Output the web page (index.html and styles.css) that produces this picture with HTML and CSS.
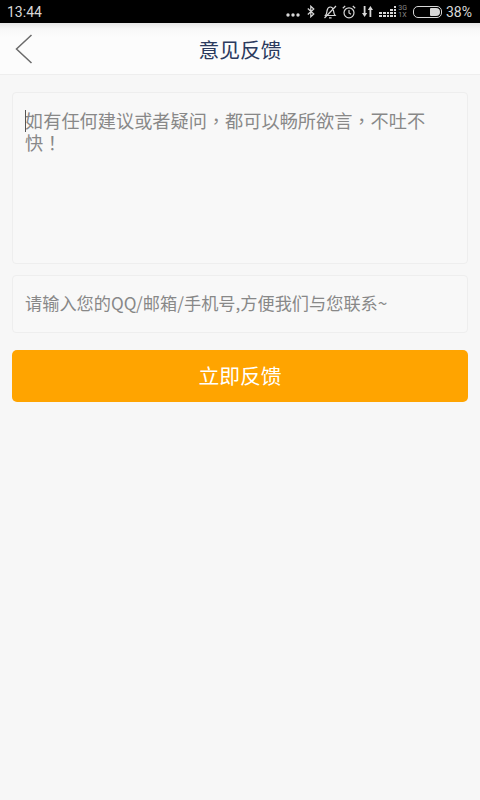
FILE: index.html
```html
<!DOCTYPE html>
<html lang="zh-CN">
<head>
    <meta charset="UTF-8">
    <meta name="viewport" content="width=device-width, initial-scale=1.0">
    <title>意见反馈</title>
    <link rel="stylesheet" href="styles.css">
</head>
<body>
    <div class="status-bar">
        <span class="status-time">13:44</span>
        <div class="status-icons">
            <svg class="icon-dots" width="14" height="4" viewBox="0 0 14 4"><circle cx="2" cy="2" r="1.7"/><circle cx="7" cy="2" r="1.7"/><circle cx="12" cy="2" r="1.7"/></svg>
            <svg class="icon-line icon-bt" width="8" height="13" viewBox="0 0 8 13"><path d="M.8 3.500l6 5.500-3 2.800V1.200l3 2.800-6 5.500" /></svg>
            <svg class="icon-line icon-bell" width="14" height="14" viewBox="0 0 14 14"><path d="M2.500 10.500c1.400-1.500 1.200-3.200 1.600-5C4.500 3.500 5.800 2 7.300 2s2.800 1.500 3.200 3.500c.4 1.800.2 3.500 1.600 5H2.500zM6 12.800h2.600M1.500 13L13 1"/></svg>
            <svg class="icon-line icon-alarm" width="14" height="14" viewBox="0 0 14 14"><circle cx="7" cy="7.800" r="5"/><path d="M7 5v3l2 1.200M.8 3.200L3.200 1M13.200 3.200L10.800 1"/></svg>
            <svg class="icon-fill" width="11" height="11" viewBox="0 0 11 11"><path d="M1.700 0h1.800v7H5.200L2.600 11 0 7h1.700zM7.500 11h1.800V4H11L8.400 0 5.800 4h1.700z"/></svg>
            <div class="signal">
                <i class="bar-1"></i><i class="bar-1"></i><i class="bar-1"></i><i class="bar-2"></i><i class="bar-3"></i>
            </div>
            <div class="net-type"><span>3G</span><span>1X</span></div>
            <div class="battery"><div class="battery-level"></div></div>
            <span class="status-percent">38%</span>
        </div>
    </div>

    <div class="header">
        <svg class="back-icon" width="18" height="30" viewBox="0 0 18 30"><path d="M16.500 1L1.500 15l15 14"/></svg>
        <h1>意见反馈</h1>
    </div>

    <form class="feedback-form">
        <div class="field field-message" lang="zh-TW">
            <span class="caret"></span>如有任何建议或者疑问，都可以畅所欲言，不吐不快！
        </div>
        <div class="field field-contact">请输入您的QQ/邮箱/手机号,方便我们与您联系~</div>
        <button type="button" class="submit-btn">立即反馈</button>
    </form>
</body>
</html>
```

FILE: styles.css
```css
html, body {
    height: 100%;
}

body {
    margin: 0;
    background: #f7f7f7;
    font-family: "Noto Sans CJK SC", "Liberation Sans", sans-serif;
}

.status-bar {
    height: 23px;
    background: #000;
    color: #d8d8d8;
    display: flex;
    align-items: center;
    justify-content: space-between;
    padding: 0 8px 0 7px;
    font-family: Roboto, "Liberation Sans", sans-serif;
    font-size: 14px;
}

.status-icons {
    display: flex;
    align-items: center;
}

.status-icons svg {
    display: block;
}

.icon-dots {
    fill: #d8d8d8;
    margin-top: 6px;
    margin-right: 7px;
}

.icon-line {
    fill: none;
    stroke: #d8d8d8;
    stroke-width: 1.2;
}

.icon-bt {
    margin-right: 8px;
}

.icon-bell {
    margin-right: 5px;
}

.icon-alarm {
    margin-right: 6px;
}

.icon-fill {
    fill: #d8d8d8;
    margin-right: 6px;
}

.signal {
    display: flex;
    align-items: flex-end;
    gap: 1px;
    height: 11px;
    margin-right: 2px;
}

.signal i {
    display: block;
    width: 2.6px;
    background: repeating-linear-gradient(to top, #d8d8d8 0 2px, transparent 2px 3px);
}

.bar-1 {
    height: 5px;
}

.bar-2 {
    height: 8px;
}

.bar-3 {
    height: 11px;
}

.net-type {
    display: flex;
    flex-direction: column;
    font-size: 7px;
    line-height: 7px;
    color: #8a8a8a;
    margin-right: 6px;
}

.battery {
    width: 26px;
    height: 8px;
    border: 1px solid #d8d8d8;
    border-radius: 5px;
    margin-right: 4px;
    display: flex;
    justify-content: flex-end;
    padding: 1px 1px 1px 0;
}

.battery-level {
    width: 10px;
    background: #d8d8d8;
    border-radius: 1px 4px 4px 1px;
}

.header {
    height: 51px;
    background: linear-gradient(#e6e6e6, #f8f8f8 6px, #fcfcfc 14px);
    border-bottom: 1px solid #eeeeee;
    display: flex;
    align-items: center;
    justify-content: center;
    position: relative;
}

.header h1 {
    margin: 0;
    font-size: 20.8px;
    font-weight: 400;
    color: #2b3a5e;
}

.back-icon {
    position: absolute;
    left: 15px;
    top: 11px;
    fill: none;
    stroke: #6b6b6b;
    stroke-width: 1.5;
}

.feedback-form {
    padding: 17px 12px 0;
}

.field {
    background: #f8f8f8;
    border: 1px solid #eeeeee;
    border-radius: 4px;
    color: #888;
    box-sizing: border-box;
}

.field-message {
    height: 172px;
    padding: 16px 12px;
    font-family: "Noto Sans CJK TC", sans-serif;
    font-size: 18.2px;
    line-height: 22px;
    position: relative;
}

.caret {
    position: absolute;
    left: 12px;
    top: 17px;
    width: 1px;
    height: 22px;
    background: #555;
}

.field-contact {
    height: 58px;
    margin-top: 11px;
    padding: 0 12px;
    line-height: 54px;
    font-size: 17.2px;
    white-space: nowrap;
}

.submit-btn {
    display: block;
    width: 100%;
    height: 52px;
    margin-top: 17px;
    padding: 0 0 2px;
    background: #ffa400;
    color: #fff;
    border: none;
    border-radius: 5px;
    font-family: inherit;
    font-size: 20.8px;
}
```
